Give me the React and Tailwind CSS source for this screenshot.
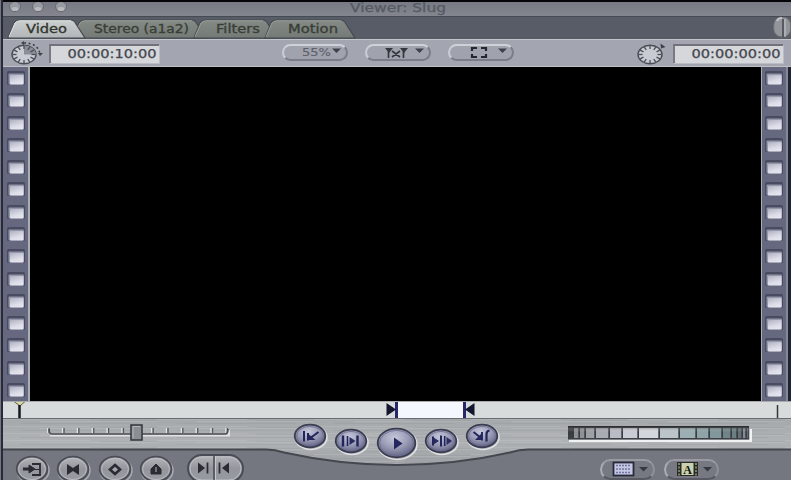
import React from 'react';

const FONT = "font-['DejaVu_Sans',Verdana,sans-serif]";

function Label({ x, y = 12, size = 11, width, children, color = '#2b2f2a', stroke = 0.15 }) {
  return (
    <text x={x} y={y} fontSize={size} textLength={width} lengthAdjust="spacingAndGlyphs" fill={color} stroke={color} strokeWidth={stroke} className={FONT}>
      {children}
    </text>
  );
}

function Tab({ left, width, textX, textWidth, active, children }) {
  const id = 'tab' + left;
  return (
    <svg width={width} height="20" className={'shrink-0 overflow-visible ' + (active ? 'relative z-10' : '-ml-3')}>
      <defs>
        <linearGradient id={id} x1="0" x2="0" y1="0" y2="1">
          <stop offset="0" stopColor={active ? '#cbcfce' : '#858a86'} />
          <stop offset="1" stopColor={active ? '#b2b5b9' : '#747a76'} />
        </linearGradient>
      </defs>
      <path
        d={`M0 19 L6 4 Q8 1 12 1 H${width - 14} Q${width - 11} 1 ${width - 9} 5 L${width} 19 Z`}
        fill={`url(#${id})`}
        stroke="#444a50"
        strokeWidth="1.2"
      />
      <path d={`M1 18 L7 4 Q9 1.8 12 1.8 H${width - 14}`} fill="none" stroke={active ? '#e0e3e1' : '#989e98'} strokeWidth="1" />
      <Label x={textX} y={14.2} size={11.5} width={textWidth} color={active ? '#30352c' : '#383e35'} stroke={0.3}>{children}</Label>
    </svg>
  );
}

function Clock({ flip }) {
  const ticks = Array.from({ length: 12 }, (_, i) => (i * Math.PI) / 6);
  return (
    <svg width="34" height="26" className="shrink-0 overflow-visible">
      <ellipse cx="14" cy="14.5" rx="12" ry="9.2" fill="#c8cbd1" stroke="#4a4d55" strokeWidth="1.4" />
      {!flip && <path d="M14 14.5V5.5A12 9 0 0 1 26 14.5Z" fill="#8b8e98" />}
      {ticks.map((a) => (
        <line
          key={a}
          x1={14 + 7.5 * Math.cos(a)}
          y1={14.5 + 5.4 * Math.sin(a)}
          x2={14 + 11.4 * Math.cos(a)}
          y2={14.5 + 8.6 * Math.sin(a)}
          stroke="#4a4d55"
          strokeWidth="1.3"
        />
      ))}
      {flip ? (
        <path d="M24.5 3.5l5 3.5-4.5 1.5z" fill="#3e4148" />
      ) : (
        <g>
          <path d="M14 3Q28 3 30 14" fill="none" stroke="#3e4148" strokeWidth="1.6" strokeDasharray="2 2.5" />
          <path d="M14 1v4l-3-2zM28 13h5l-3 3z" fill="#3e4148" />
        </g>
      )}
    </svg>
  );
}

function Timecode({ children }) {
  return (
    <div className="h-[19px] w-[110px] shrink-0 border-t-2 border-l-2 border-t-[#6f727a] border-l-[#777a83] bg-[#d6d7db] shadow-[1px_1px_0_#babdc3]">
      <svg width="108" height="17">
        <Label x={16.5} y={12} size={11.5} width={89} color="#43464c" stroke={0.25}>{children}</Label>
      </svg>
    </div>
  );
}

function PillButton({ children }) {
  return (
    <div className="h-[17px] w-[66px] shrink-0 rounded-full border-2 border-t-[#cfd1d8] border-r-[#7b7e88] border-b-[#7b7e88] border-l-[#cacdd4] bg-[#a0a3ae]">
      <svg width="62" height="13" className="overflow-visible">
        {children}
        <path d="M48 2.5h9l-4.5 4.5z" fill="#3e4148" />
      </svg>
    </div>
  );
}

function FilmStrip({ side }) {
  return (
    <div
      className={
        'flex w-[27px] shrink-0 flex-col items-center justify-around bg-[#65687e] ' +
        (side === 'left'
          ? 'border-r-2 border-[#a9adb4]'
          : 'border-r-2 border-l border-r-[#85899a] border-l-[#a9adb4]')
      }
    >
      {Array.from({ length: 15 }, (_, i) => (
        <svg key={i} width="18" height="14" className="shrink-0">
          <rect width="18" height="14" rx="1.5" fill="#494c61" />
          <rect x="1.5" y="2.5" width="15.5" height="11" rx="1" fill="#9496aa" />
          <rect x="3" y="4" width="13.5" height="9.5" rx="1" fill="url(#filmHole)" />
        </svg>
      ))}
    </div>
  );
}

function RoundButton({ rx, ry, blue, className = '', children }) {
  const w = rx * 2 + 4;
  const h = ry * 2 + 4;
  const fill = blue ? 'url(#blueButton)' : 'url(#grayButton)';
  return (
    <svg width={w} height={h} viewBox={`${-w / 2} ${-h / 2} ${w} ${h}`} className={'shrink-0 overflow-visible ' + className}>
      <ellipse cx="1" cy="1.4" rx={rx} ry={ry} fill="none" stroke={blue ? '#dfe1e3' : '#a8abb1'} strokeWidth="1.5" />
      <ellipse rx={rx - 0.7} ry={ry - 0.7} fill={fill} stroke={blue ? '#3a3c50' : '#4a4d55'} strokeWidth="1.8" />
      <ellipse rx={rx - 2.6} ry={ry - 2.4} fill="none" stroke={blue ? '#6a6c8c' : '#c0c2c6'} strokeWidth="1" opacity="0.8" />
      {children}
    </svg>
  );
}

function TransportBackground() {
  const edge = 'M0 31.5 H266 Q275 31.7 284 34.5 Q340 47 397 47 Q455 47 510 34.5 Q519 31.7 528 31.5 H791';
  return (
    <svg width="788" height="62" viewBox="3 0 788 62" className="absolute inset-0">
      <defs>
        <linearGradient id="brushed" x1="0" x2="0" y1="0" y2="1">
          <stop offset="0" stopColor="#a5a8ab" />
          <stop offset="0.5" stopColor="#b0b3b5" />
          <stop offset="1" stopColor="#9da0a4" />
        </linearGradient>
        <linearGradient id="filmHole" x1="0" x2="0.4" y1="0" y2="1">
          <stop offset="0" stopColor="#b0b1c1" />
          <stop offset="0.7" stopColor="#dcdce8" />
          <stop offset="1" stopColor="#e4e4ee" />
        </linearGradient>
        <pattern id="grain" width="157" height="7" patternUnits="userSpaceOnUse">
          <path d="M0 1.5H90M40 3.5H157" stroke="#d1d3d3" strokeWidth="0.7" />
          <path d="M20 5.5H140M100 2.5H157" stroke="#83878c" strokeWidth="0.6" />
        </pattern>
        <radialGradient id="blueButton" cx="0.45" cy="0.32" r="0.65">
          <stop offset="0" stopColor="#c5c8da" />
          <stop offset="0.55" stopColor="#9a9cb6" />
          <stop offset="1" stopColor="#656787" />
        </radialGradient>
        <linearGradient id="grayButton" x1="0" x2="0" y1="0" y2="1">
          <stop offset="0" stopColor="#b3b5ba" />
          <stop offset="0.5" stopColor="#94969d" />
          <stop offset="1" stopColor="#999ba2" />
        </linearGradient>
      </defs>
      <rect width="791" height="62" fill="#747780" />
      <path d={`${edge} V0 H0 Z`} fill="url(#brushed)" />
      <path d={`${edge} V0 H0 Z`} fill="url(#grain)" opacity="0.3" />
      <path d={edge} fill="none" stroke="#45484f" strokeWidth="2" />
      <path d="M0 .5H791" stroke="#686c70" />
    </svg>
  );
}

function SpeedSlider() {
  return (
    <svg width="188" height="22" className="shrink-0 overflow-visible">
      <path d="M4 12.5H183V7" fill="none" stroke="#e0e2e3" strokeWidth="2" />
      {Array.from({ length: 13 }, (_, i) => (
        <g key={i}>
          <path d={`M${1.7 + i * 14.85} 5v5`} stroke="#e1e3e5" strokeWidth="1.4" />
          <path d={`M${3.2 + i * 14.85} 5v5`} stroke="#54575d" strokeWidth="1.3" />
        </g>
      ))}
      <path d="M3 6Q3 11 6 11H179Q182 11 182 6" fill="none" stroke="#4b4e54" strokeWidth="1.6" />
      <rect x="85" y="2" width="11" height="15" fill="#8b8e93" stroke="#393c41" strokeWidth="1.6" />
      <path d="M87 15V3.5H94" fill="none" stroke="#b5b7ba" />
    </svg>
  );
}

function JogWheel() {
  const cells = [
    [0, 3, '#35383b'], [5, 4, '#8b8e91'], [11, 4, '#8b8e92'], [17, 8, '#9a9da2'], [27, 12, '#a6a9b0'],
    [41, 11, '#b7bac2'], [54, 14, '#c8cbd3'], [70, 19, '#d2d5db'], [91, 18, '#b9c3c8'],
    [111, 15, '#98adb1'], [128, 11, '#8ba1a6'], [141, 11, '#7d9498'], [154, 7, '#6b8185'],
    [163, 4, '#66797c'], [169, 3, '#5e6d72'], [174, 2, '#7e888e'], [178, 1, '#606570'],
  ];
  return (
    <svg width="184" height="18" className="shrink-0">
      <defs>
        <linearGradient id="wheelShade" x1="0" x2="0" y1="0" y2="1">
          <stop offset="0" stopColor="#111" stopOpacity="0.55" />
          <stop offset="0.45" stopColor="#fff" stopOpacity="0.02" />
          <stop offset="1" stopColor="#fff" stopOpacity="0.05" />
        </linearGradient>
      </defs>
      <path d="M1 14.8H183V3" fill="none" stroke="#f0f2f4" strokeWidth="2.4" />
      <rect width="181" height="13.5" fill="#33373d" />
      {cells.map(([x, w, c]) => (
        <rect key={x} x={x + 1} y="2" width={w + 0.3} height="10" fill={c} />
      ))}
      <rect width="181" height="13" fill="url(#wheelShade)" />
    </svg>
  );
}

function MenuButton({ children }) {
  return (
    <div className="h-[21px] w-[55px] shrink-0 rounded-full border-2 border-t-[#989ba1] border-r-[#8f929a] border-b-[#575a62] border-l-[#aaadb4] bg-[#767981]">
      <svg width="51" height="17" className="overflow-visible">
        {children}
        <path d="M37 6h9l-4.5 4.5z" fill="#36393f" />
      </svg>
    </div>
  );
}

export default function App() {
  return (
    <div className="flex h-[480px] w-[791px] overflow-hidden bg-[#777a86]">
      <div className="w-[3px] shrink-0 border-r-2 border-[#282b37] bg-[#747783]" />
      <div className="flex w-[788px] flex-col">
        <header className="flex h-4 items-start border-t-2 border-[#050509] bg-linear-to-b from-[#777a84] to-[#83868e]">
          <svg width="66" height="14" className="shrink-0">
            {[12, 35, 58].map((x) => (
              <g key={x}>
                <ellipse cx={x} cy="4.5" rx="5.5" ry="5" fill="#989ba2" stroke="#646770" strokeWidth="1" />
                <ellipse cx={x} cy="7" rx="3.5" ry="2" fill="#b8babe" />
              </g>
            ))}
          </svg>
          <svg width="100" height="14" className="ml-[280px] overflow-visible">
            <Label x={1} y={9.6} size={11.5} width={96} color="#555963" stroke={0.25}>Viewer: Slug</Label>
          </svg>
        </header>

        <div className="flex h-[23px] items-end border-t border-[#454a54] bg-[#575c66] pl-[5px]">
          <Tab left={8} width={77} textX={18} textWidth={41} active>Video</Tab>
          <Tab left={73} width={133} textX={21} textWidth={95}>Stereo (a1a2)</Tab>
          <Tab left={194} width={83} textX={22} textWidth={44}>Filters</Tab>
          <Tab left={265} width={90} textX={23} textWidth={50}>Motion</Tab>
          <svg width="18" height="22" className="ml-auto">
            <rect x=".7" y="0" width="17" height="20" rx="8" fill="#92959a" stroke="#686c72" />
            <path d="M4 4Q5 1 9 1" stroke="#c2c4c6" fill="none" strokeWidth="2" />
            <path d="M10 2v18" stroke="#363a41" strokeWidth="1.3" />
            <path d="M12 2v18" stroke="#c7c9cb" strokeWidth="1" />
          </svg>
        </div>

        <div className="flex h-7 items-center border-t border-b border-t-[#c3c5ca] border-b-[#bfc1c5] bg-[#a3a6b0] pr-[8px] pl-[7px]">
          <Clock />
          <div className="ml-[5px]"><Timecode>00:00:10:00</Timecode></div>
          <div className="mb-px ml-[123px] flex gap-[17px]">
            <PillButton>
              <Label x={18} y={9.6} size={11} width={29} color="#5f626b">55%</Label>
            </PillButton>
            <PillButton>
              <path d="M21.5 3v9M36.5 3v9M25 5l8 6M33 5l-8 6" fill="none" stroke="#34373e" strokeWidth="1.7" />
              <path d="M18 2h8l-4 5zM33 2h8l-4 5z" fill="#34373e" />
            </PillButton>
            <PillButton>
              <path d="M22 5V2h5M31 2h5v3M36 8v3h-5M27 11h-5V8" fill="none" stroke="#24272e" strokeWidth="2.2" />
            </PillButton>
          </div>
          <div className="ml-auto flex items-center gap-[3px]">
            <Clock flip />
            <Timecode>00:00:00:00</Timecode>
          </div>
        </div>

        <main className="flex h-[334px]">
          <FilmStrip side="left" />
          <div className="flex-1 bg-black" />
          <FilmStrip side="right" />
          <div className="w-[3px] bg-[#202330]" />
        </main>

        <div className="flex h-[17px] border-t border-t-[#a8aaab] bg-[#d8dbdc]">
          <svg width="788" height="16" viewBox="3 402 788 16">
            <path d="M14 401.5H25L20 406Z" fill="#d8d6a6" stroke="#65643c" />
            <path d="M19.5 405V418" stroke="#15171a" strokeWidth="2.5" />
            <rect x="396" y="402" width="69" height="16" fill="#f5f7ff" />
            <path d="M396.5 402V418M464.5 402V418" stroke="#27286c" strokeWidth="3" />
            <path d="M386.5 403l9.5 6.5-9.5 6.5zM474.5 403l-9.5 6.5 9.5 6.5z" fill="#14152f" />
            <path d="M777.5 405V418" stroke="#34373a" strokeWidth="1.5" />
          </svg>
        </div>

        <footer className="relative h-[62px] overflow-hidden">
          <TransportBackground />
          <div className="relative flex h-8 items-start pl-[43px]">
            <div className="w-[188px] pt-[5px]"><SpeedSlider /></div>
            <div className="ml-[58px] flex w-[208px] items-start justify-between">
              <RoundButton rx={16} ry={12} blue className="mt-[4px]">
                <path d="M-6 -5V5.5M-2 -3V4.5M-1 3L8.5 -4" stroke="#22245a" strokeWidth="2" />
                <path d="M-1 -1.5L5.5 4H-1z" fill="#24265d" />
              </RoundButton>
              <RoundButton rx={16} ry={12} blue className="mt-[9px]">
                <path d="M-8 -5.5V5.5M6.5 -5.5V5.5" stroke="#22245a" strokeWidth="2.4" />
                <path d="M-3.5 -5V5" stroke="#22245a" strokeWidth="1.6" />
                <path d="M-1.5 -4L4.5 0L-1.5 4z" fill="#292b61" />
              </RoundButton>
              <RoundButton rx={19.5} ry={15} blue className="mt-[8px]">
                <path d="M-2.5 -5.5L6 0.5L-2.5 6.5z" fill="#24265d" />
              </RoundButton>
              <RoundButton rx={16} ry={12} blue className="mt-[9px]">
                <path d="M-8 -4.5V4.5M0 -5.5V5.5" stroke="#22245a" strokeWidth="2" />
                <path d="M3.7 -5V5" stroke="#22245a" strokeWidth="1.6" />
                <path d="M-7.5 -3.5L-2 0L-7.5 3.5zM5.5 -4L11 0L5.5 4z" fill="#292b61" />
              </RoundButton>
              <RoundButton rx={16} ry={12} blue className="mt-[4px]">
                <path d="M-8.5 -4L-1 2M0 -4V4.5" fill="none" stroke="#22245a" strokeWidth="1.9" />
                <path d="M7.5 -5.5Q4.5 -5 4.5 -2V5.5" fill="none" stroke="#22245a" strokeWidth="2.2" />
                <path d="M0 -3V4H-7z" fill="#24265d" />
              </RoundButton>
            </div>
            <div className="mt-[8px] ml-[68px]"><JogWheel /></div>
          </div>

          <div className="relative flex h-[30px] items-start pt-[4px] pl-[11px]">
            <div className="flex gap-[5.3px]">
              <RoundButton rx={16} ry={13}>
                <path d="M-9 0H0" stroke="#292c32" strokeWidth="3" />
                <path d="M0 -5H8V6H0" fill="none" stroke="#292c32" strokeWidth="1.8" />
                <path d="M-3 -4L3 0L-3 4zM2 0.5h5" stroke="#292c32" fill="#292c32" />
              </RoundButton>
              <RoundButton rx={16} ry={13}>
                <path d="M-6 -5L0 -1L6 -5V6L0 2L-6 6z" fill="#292c32" />
              </RoundButton>
              <RoundButton rx={16} ry={13}>
                <path d="M0 -4L5 0.5L0 5L-5 0.5z" fill="#a4a6ab" stroke="#292c32" strokeWidth="2.6" />
              </RoundButton>
              <RoundButton rx={16} ry={13}>
                <path d="M0 -5L5 0V5H-5V0z" fill="#292c32" stroke="#292c32" />
                <path d="M0 -2V3" stroke="#9699a0" strokeWidth="1.3" />
              </RoundButton>
            </div>
            <svg width="58" height="30" className="ml-[13px] overflow-visible">
              <rect x="1" y="1" width="55" height="27" rx="14" fill="url(#grayButton)" stroke="#494c54" strokeWidth="2" />
              <rect x="3" y="3" width="51" height="23" rx="12" fill="none" stroke="#bdbfc4" />
              <path d="M27 1V28" stroke="#484b52" strokeWidth="1.5" />
              <path d="M28.5 2V27" stroke="#c6c8cc" />
              <path d="M11 8.5L18 14L11 19.5zM42 8.5L35 14L42 19.5z" fill="#292c32" />
              <path d="M20.5 8.5V19.5M32.5 8.5V19.5" stroke="#292c32" strokeWidth="1.7" />
            </svg>
            <div className="mt-[5px] mr-[72px] ml-auto flex gap-[9px]">
              <MenuButton>
                <rect x="11.5" y="1.5" width="20" height="13" fill="#c4c7df" stroke="#27293c" strokeWidth="1.8" />
                <path d="M14 4.5H29M14 8H29M14 11.5H29" stroke="#7275a3" strokeWidth="1.3" strokeDasharray="2 1" />
              </MenuButton>
              <MenuButton>
                <rect x="11" y="1" width="21" height="14" fill="#292c25" />
                <path d="M13 2V15M30 2V15" stroke="#949b83" strokeWidth="1.5" strokeDasharray="2 1.5" />
                <rect x="15.5" y="2" width="12" height="12" fill="#c9d1b0" />
                <text x="21.5" y="12.5" textAnchor="middle" fontSize="12" fontWeight="700" fill="#141710" className="font-['Liberation_Serif',serif]">A</text>
              </MenuButton>
            </div>
          </div>
        </footer>
      </div>
    </div>
  );
}
